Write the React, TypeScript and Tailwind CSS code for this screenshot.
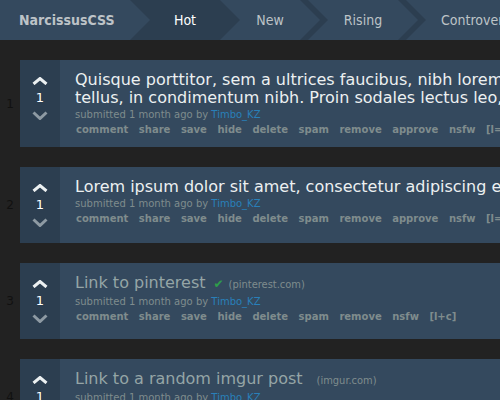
import React from "react";

type Post = {
  rank: number;
  title: string;
  link?: boolean;
  verified?: boolean;
  domain?: string;
  actions: string[];
};

const fullActions = ["comment", "share", "save", "hide", "delete", "spam", "remove", "approve", "nsfw", "[l=c]"];
const linkActions = ["comment", "share", "save", "hide", "delete", "spam", "remove", "nsfw", "[l+c]"];

const posts: Post[] = [
  {
    rank: 1,
    title:
      "Quisque porttitor, sem a ultrices faucibus, nibh lorem fermentum tellus, in condimentum nibh. Proin sodales lectus leo, at pretium.",
    actions: fullActions,
  },
  {
    rank: 2,
    title: "Lorem ipsum dolor sit amet, consectetur adipiscing elit.",
    actions: fullActions,
  },
  {
    rank: 3,
    title: "Link to pinterest",
    link: true,
    verified: true,
    domain: "(pinterest.com)",
    actions: linkActions,
  },
  {
    rank: 4,
    title: "Link to a random imgur post",
    link: true,
    domain: "(imgur.com)",
    actions: linkActions,
  },
];

// chevron separator between inactive tabs
function Separator() {
  return (
    <svg width="28" height="40" viewBox="0 0 28 40" className="shrink-0 block">
      <polygon points="0,0 8,0 28,20 8,40 0,40 20,20" fill="#2c3e50" />
    </svg>
  );
}

function Header() {
  return (
    <div className="flex h-[40px] bg-[#34495e] font-['DejaVu_Sans_Condensed','DejaVu_Sans',sans-serif] text-[14px] text-[#bdc3c7] whitespace-nowrap">
      <div className="w-[130px] shrink-0 pl-[19px] flex items-center font-bold">NarcissusCSS</div>
      <div className="w-[110px] shrink-0 flex items-center justify-center bg-[#2c3e50] text-white [clip-path:polygon(0_0,90px_0,110px_50%,90px_100%,0_100%,20px_50%)]">
        Hot
      </div>
      <div className="w-[60px] shrink-0 flex items-center justify-center">New</div>
      <Separator />
      <div className="w-[70px] shrink-0 flex items-center justify-center">Rising</div>
      <Separator />
      <div className="shrink-0 pl-[15px] flex items-center">Controversial</div>
    </div>
  );
}

function VoteColumn() {
  return (
    <div className="w-[40px] shrink-0 bg-[#2c3e50] flex flex-col items-center pt-[17px] pb-[16px]">
      <svg width="16" height="8" viewBox="0 0 16 8" className="block">
        <polyline points="1.5,7 8,1.5 14.5,7" fill="none" stroke="#ecf0f1" strokeWidth="3" />
      </svg>
      <div className="h-[26px] leading-[26px] text-[13px] text-white">1</div>
      <svg width="16" height="9" viewBox="0 0 16 9" className="block">
        <polyline points="1.5,1.5 8,7.5 14.5,1.5" fill="none" stroke="#8e9aa3" strokeWidth="3" />
      </svg>
    </div>
  );
}

function PostRow({ post }: { post: Post }) {
  return (
    <div className="flex">
      <div className="w-[20px] shrink-0 flex items-center justify-center text-[12px] text-[#111]">
        {post.rank}
      </div>
      <div className="flex w-[620px] bg-[#34495e]">
        <VoteColumn />
        <div className="w-[580px] pl-[15px] pr-[25px] pt-[11px] pb-[10px]">
          <div className="text-[16px] leading-[18px]">
            <span className={post.link ? "text-[#95a5a6]" : "text-[#ecf0f1]"}>{post.title}</span>
            {post.verified && <span className="ml-[8px] text-[12px] text-[#2e9e4a]">✔</span>}
            {post.domain && (
              <span
                className={
                  "text-[11px] text-[#7f8c8d] font-['DejaVu_Sans_Condensed','DejaVu_Sans',sans-serif] " +
                  (post.verified ? "ml-[5px]" : "ml-[14px]")
                }
              >
                {post.domain}
              </span>
            )}
          </div>
          <div className="text-[10px] leading-[15px] text-[#7f8c8d] whitespace-nowrap">
            submitted 1 month ago by <span className="text-[#2980b9]">Timbo_KZ</span>
          </div>
          <div className="flex gap-[10.5px] pl-[1px] text-[10px] leading-[15px] font-bold text-[#7f8c8d] whitespace-nowrap">
            {post.actions.map((a) => (
              <span key={a}>{a}</span>
            ))}
          </div>
        </div>
      </div>
    </div>
  );
}

export default function App() {
  return (
    <div className="w-full min-h-screen overflow-hidden bg-[#222222] font-['DejaVu_Sans',sans-serif]">
      <div className="w-[700px]">
        <Header />
        <div className="flex flex-col gap-[20px] pt-[20px] pb-[20px]">
          {posts.map((p) => (
            <PostRow key={p.rank} post={p} />
          ))}
        </div>
      </div>
    </div>
  );
}
